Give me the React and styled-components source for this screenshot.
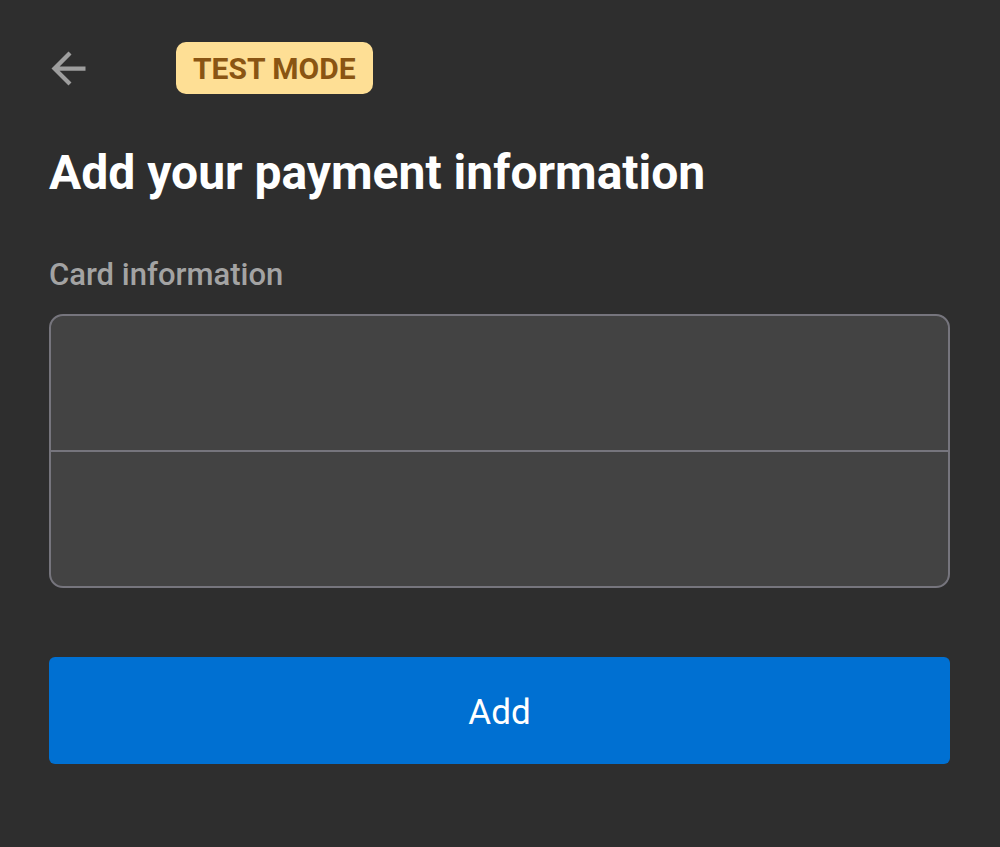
import React from 'react'
import styled, { createGlobalStyle } from 'styled-components'

const Global = createGlobalStyle`
  html, body {
    margin: 0;
    padding: 0;
    background: #2e2e2e;
  }
  body {
    font-family: Roboto, "Noto Sans", "Liberation Sans", sans-serif;
  }
`

const Page = styled.div`
  min-height: 847px;
  box-sizing: border-box;
  padding: 42px 50px 0 49px;
  background: #2e2e2e;
  display: flex;
  flex-direction: column;
`

const Header = styled.div`
  display: flex;
  align-items: center;
  height: 52px;
`

const BackButton = styled.button`
  width: 51px;
  height: 51px;
  margin-left: -6px;
  padding: 0;
  border: none;
  background: transparent;
  display: flex;
  align-items: center;
  justify-content: center;
  cursor: pointer;

  svg {
    width: 51px;
    height: 51px;
    fill: #9e9e9e;
  }
`

const Badge = styled.span`
  margin-left: 82px;
  height: 52px;
  box-sizing: border-box;
  padding: 0 17px;
  display: inline-flex;
  align-items: center;
  background: #fedf95;
  color: #8a5513;
  border-radius: 10px;
  font-size: 30px;
  font-weight: 700;
`

const Title = styled.h1`
  margin: 51px 0 0;
  font-size: 48px;
  line-height: 56px;
  font-weight: 700;
  color: #ffffff;
`

const Label = styled.div`
  margin-top: 56px;
  font-size: 31px;
  line-height: 36px;
  font-weight: 500;
  color: #a3a3a3;
`

const CardBox = styled.div`
  margin-top: 21px;
  height: 274px;
  box-sizing: border-box;
  border: 2px solid #76757d;
  border-radius: 14px;
  background: #434343;
  display: flex;
  flex-direction: column;
  overflow: hidden;
`

const CardField = styled.div`
  flex: 1;
  border-top: ${({ $divided }) => ($divided ? '2px solid #76757d' : 'none')};
`

const AddButton = styled.button`
  margin-top: 69px;
  height: 107px;
  padding: 4px 0 0;
  border: none;
  border-radius: 6px;
  background: #0070d2;
  color: #ffffff;
  font-family: inherit;
  font-size: 35px;
  font-weight: 400;
  cursor: pointer;
`

export default function App() {
  return (
    <>
      <Global />
      <Page>
        <Header>
          <BackButton aria-label="Back">
            <svg viewBox="0 0 24 24">
              <path d="M20 11H7.83l5.59-5.59L12 4l-8 8 8 8 1.41-1.41L7.83 13H20v-2z" />
            </svg>
          </BackButton>
          <Badge>TEST MODE</Badge>
        </Header>
        <Title>Add your payment information</Title>
        <Label>Card information</Label>
        <CardBox>
          <CardField />
          <CardField $divided />
        </CardBox>
        <AddButton>Add</AddButton>
      </Page>
    </>
  )
}
